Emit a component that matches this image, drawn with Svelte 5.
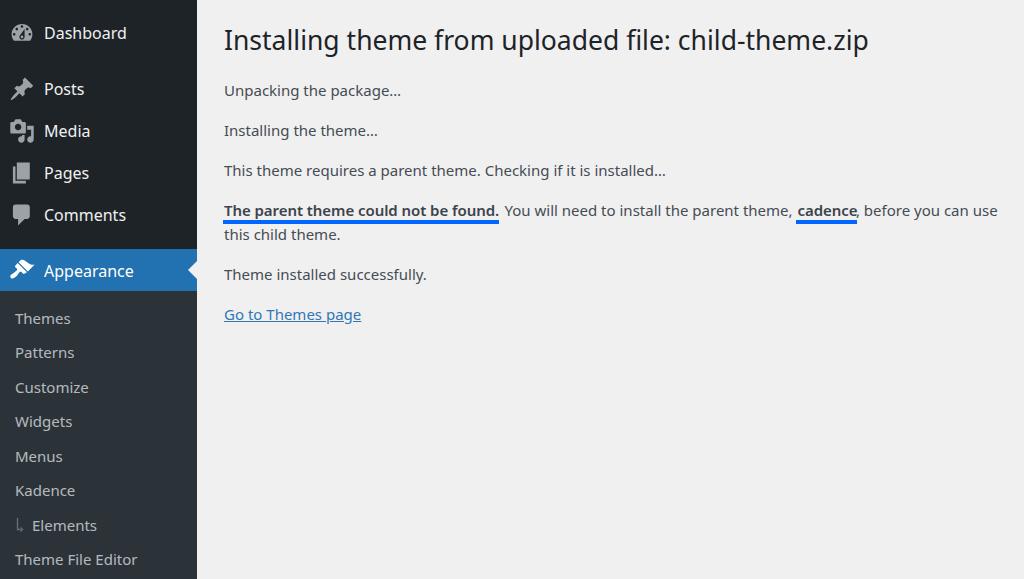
<script>
	const groups = [
		[
			{
				label: 'Dashboard',
				icon: 'M3.76 16h12.48c1.1-1.37 1.76-3.11 1.76-5 0-4.42-3.58-8-8-8s-8 3.58-8 8c0 1.89.66 3.63 1.76 5zM10 4c.55 0 1 .45 1 1s-.45 1-1 1-1-.45-1-1 .45-1 1-1zM6 6c.55 0 1 .45 1 1s-.45 1-1 1-1-.45-1-1 .45-1 1-1zm8 0c.55 0 1 .45 1 1s-.45 1-1 1-1-.45-1-1 .45-1 1-1zm-5.37 5.55L12 7v6c0 1.1-.9 2-2 2s-2-.9-2-2c0-.57.24-1.08.63-1.45zM4 10c.55 0 1 .45 1 1s-.45 1-1 1-1-.45-1-1 .45-1 1-1zm12 0c.55 0 1 .45 1 1s-.45 1-1 1-1-.45-1-1 .45-1 1-1zm-5 3c0-.55-.45-1-1-1s-1 .45-1 1 .45 1 1 1 1-.45 1-1z'
			}
		],
		[
			{
				label: 'Posts',
				icon: 'M10.44 3.02l1.82-1.82 6.36 6.35-1.83 1.82c-1.05-.68-2.48-.57-3.41.36l-.75.75c-.92.93-1.04 2.35-.35 3.41l-1.83 1.82-2.41-2.41-2.8 2.79c-.42.42-3.38 2.71-3.8 2.29s1.86-3.39 2.28-3.81l2.79-2.79L4.1 9.36l1.83-1.82c1.05.69 2.48.57 3.4-.36l.75-.75c.93-.92 1.05-2.35.36-3.41z'
			},
			{
				label: 'Media',
				icon: 'M13 11V4c0-.55-.45-1-1-1h-1.67L9 1H5L3.67 3H2c-.55 0-1 .45-1 1v7c0 .55.45 1 1 1h10c.55 0 1-.45 1-1zM7 4.5c1.38 0 2.5 1.12 2.5 2.5S8.38 9.5 7 9.5 4.5 8.38 4.5 7 5.62 4.5 7 4.5zM14 6h5v10.5c0 1.38-1.12 2.5-2.5 2.5S14 17.88 14 16.5s1.12-2.5 2.5-2.5c.17 0 .34.02.5.05V9h-3V6zm-4 8.05V13h2v3.5c0 1.38-1.12 2.5-2.5 2.5S7 17.88 7 16.5 8.12 14 9.5 14c.17 0 .34.02.5.05z'
			},
			{ label: 'Pages', icon: 'M6 15V2h10v13H6zm-1 1h8v2H3V5h2v11z' },
			{
				label: 'Comments',
				icon: 'M5 2h9c1.1 0 2 .9 2 2v7c0 1.1-.9 2-2 2h-2l-5 5v-5H5c-1.1 0-2-.9-2-2V4c0-1.1.9-2 2-2z'
			}
		]
	];
	const brush =
		'M14.48 11.06L7.41 3.99l1.5-1.5c.5-.56 2.3-.47 3.51.32 1.21.8 1.43 1.28 2.91 2.1 1.18.64 2.45 1.26 4.45.85zm-.71.71L6.7 4.7 4.93 6.47c-.39.39-.39 1.02 0 1.41l1.06 1.06c.39.39.39 1.03 0 1.42-.6.6-1.43 1.11-2.21 1.69-.35.26-.7.53-1.01.84C1.43 13.23.4 14.96 1.5 16.06s2.83.07 4.17-1.27c.31-.31.58-.66.84-1.01.58-.78 1.09-1.61 1.69-2.21.39-.39 1.03-.39 1.42 0l1.06 1.06c.39.39 1.02.39 1.41 0z';
	const subitems = ['Themes', 'Patterns', 'Customize', 'Widgets', 'Menus', 'Kadence'];
</script>

<div class="page">
	<nav class="sidebar">
		{#each groups as group}
			<ul class="group">
				{#each group as item}
					<li class="item">
						<svg class="icon" viewBox="0 0 20 20"><path d={item.icon} /></svg>
						<span>{item.label}</span>
					</li>
				{/each}
			</ul>
		{/each}
		<div class="item current">
			<svg class="icon" viewBox="0 0 20 20"><path d={brush} /></svg>
			<span>Appearance</span>
		</div>
		<ul class="submenu">
			{#each subitems as sub}
				<li>{sub}</li>
			{/each}
			<li class="nested">
				<svg class="arrow" viewBox="0 0 10 16"><path d="M1.5 1v11.5h3" /><path d="M4.5 10.5l2 2-2 2" /></svg>
				Elements
			</li>
			<li>Theme File Editor</li>
		</ul>
	</nav>
	<main class="content">
		<h1>Installing theme from uploaded file: child-theme.zip</h1>
		<p>Unpacking the package…</p>
		<p>Installing the theme…</p>
		<p>This theme requires a parent theme. Checking if it is installed…</p>
		<p>
			<strong class="mark first">The parent theme could not be found.</strong> You will need to install the
			parent theme, <strong class="mark second">cadence</strong>, before you can use this child theme.
		</p>
		<p>Theme installed successfully.</p>
		<p><a href="#themes">Go to Themes page</a></p>
	</main>
</div>

<style>
	:global(body) {
		margin: 0;
		background: #f0f0f1;
	}

	.page {
		display: flex;
		height: 579px;
		overflow: hidden;
		font-family: 'Noto Sans', 'Open Sans', sans-serif;
	}

	ul {
		list-style: none;
		margin: 0;
		padding: 0;
	}

	.sidebar {
		flex: 0 0 197px;
		background: #1d2327;
		color: #f0f0f1;
		padding-top: 12px;
		box-sizing: border-box;
	}

	.group {
		margin-bottom: 14px;
	}

	.group:nth-child(2) {
		margin-bottom: 13px;
	}

	.item {
		display: flex;
		align-items: center;
		gap: 9px;
		height: 42px;
		padding-left: 9px;
		font-size: 16px;
		position: relative;
	}

	.icon {
		width: 26px;
		height: 26px;
		fill: #9ca2a7;
		flex: none;
	}

	.current {
		background: #2271b1;
		color: #fff;
	}

	.current span {
		padding-top: 2px;
	}

	.current .icon {
		fill: #fff;
	}

	.current::after {
		content: '';
		position: absolute;
		right: 0;
		top: 12px;
		border: 9px solid transparent;
		border-left: 0;
		border-right-color: #f0f0f1;
	}

	.submenu {
		background: #2c3338;
		color: rgba(240, 246, 252, 0.7);
		font-size: 15px;
		padding-top: 9.5px;
		height: 288px;
	}

	.submenu li {
		display: flex;
		align-items: center;
		height: 34.5px;
		padding-left: 15px;
	}

	.submenu .nested {
		gap: 6px;
		padding-left: 16px;
	}

	.arrow {
		width: 10px;
		height: 16px;
		fill: none;
		stroke: #6b7176;
		stroke-width: 1.3;
	}

	.content {
		flex: 1;
		padding: 0 20px 0 27px;
		color: #454c53;
		font-size: 15px;
		line-height: 24px;
	}

	h1 {
		margin: 23px 0 21px;
		font-size: 26.5px;
		font-weight: 400;
		line-height: 34px;
		color: #1d2327;
	}

	p {
		margin: 0 0 16px;
	}

	strong {
		font-weight: 600;
		color: #3c434a;
		letter-spacing: -0.06px;
	}

	.mark {
		position: relative;
	}

	.first {
		margin-right: 1.5px;
	}

	.second {
		margin: 0 -1.5px 0 1px;
	}

	.mark::after {
		content: '';
		position: absolute;
		left: -1px;
		right: 0;
		bottom: -4px;
		height: 4px;
		background: #0066ff;
	}

	a {
		color: #2f78b5;
	}
</style>
